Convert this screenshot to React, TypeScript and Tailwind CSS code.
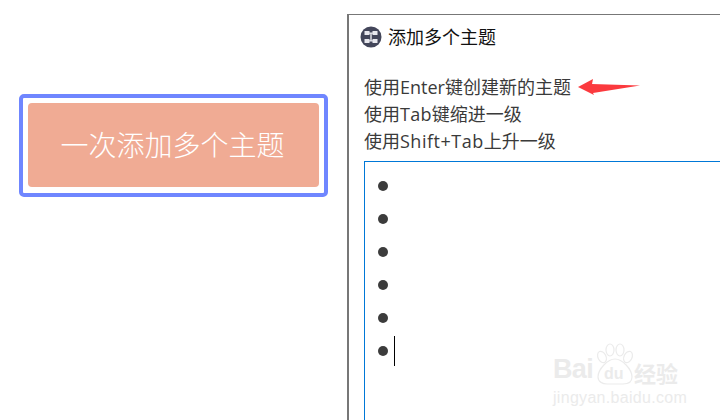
const fontStack = '"Open Sans", "Noto Sans CJK SC", sans-serif';

const MapIcon = () => (
  <svg width="22" height="22" viewBox="0 0 22 22" className="shrink-0">
    <circle cx="11" cy="11" r="10.5" fill="#43465a" />
    <path d="M4.5 5h5v1.5h3V5h5v4h-5V7.8h-.8v6.4h.8V13h5v4h-5v-1.5h-3V17h-5v-4h5v1.2h.8V7.8h-.8V9h-5z" fill="#e8e8ee" />
  </svg>
);

const RedArrow = () => (
  <svg width="64" height="18" viewBox="0 0 64 18" className="absolute left-[577px] top-[78px]">
    <path d="M1 9 L16 1 L15 6 L63 7.5 L16 15 L17 17 Z" fill="#fb3a3e" />
  </svg>
);

const Watermark = () => (
  <div className="absolute left-[553px] top-[343px] w-[130px] text-[#ebebeb]">
    <div className="flex h-[40px] items-end leading-none">
      <span className="text-[27px] font-bold tracking-tight" style={{ fontFamily: '"Liberation Sans", sans-serif' }}>
        Bai
      </span>
      <div className="relative -mb-[2px] ml-[3px] h-[42px] w-[38px] shrink-0">
        <svg width="38" height="42" viewBox="0 0 38 42" fill="none" stroke="#ebebeb" strokeWidth="1.2">
          <ellipse cx="6" cy="14" rx="4" ry="6" transform="rotate(-25 6 14)" />
          <ellipse cx="14" cy="7" rx="4" ry="6" />
          <ellipse cx="24" cy="7" rx="4" ry="6" />
          <ellipse cx="32" cy="14" rx="4" ry="6" transform="rotate(25 32 14)" />
          <path d="M19 16c-7 0-17 10-17 18 0 5 5 7 9 7h16c5 0 9-2 9-7 0-8-10-18-17-18z" />
        </svg>
        <span className="absolute bottom-[3px] left-[8px] text-[16px] font-bold leading-none" style={{ fontFamily: '"Liberation Sans", sans-serif' }}>
          du
        </span>
      </div>
      <span className="text-[22px] font-bold" style={{ fontFamily: '"Noto Sans CJK SC", sans-serif' }}>
        经验
      </span>
    </div>
    <div className="mt-[7px] text-[16px] leading-none tracking-[0.3px]" style={{ fontFamily: '"Liberation Sans", sans-serif' }}>
      jingyan.baidu.com
    </div>
  </div>
);

export default function App() {
  return (
    <div className="relative flex h-[420px] w-[720px] overflow-hidden bg-white" style={{ fontFamily: fontStack }}>
      {/* Left: button */}
      <div className="w-[347px] shrink-0 pl-[19px] pt-[94px]">
        <div className="h-[103px] w-[309px] rounded-[5px] border-[4px] border-[#6f86ff] p-[5px]">
          <div className="flex h-[84px] items-center justify-center rounded-[4px] bg-[#f0ab94] pr-[2px] text-[28px] font-light text-white">
            一次添加多个主题
          </div>
        </div>
      </div>

      {/* Right: dialog */}
      <div className="mt-[14px] flex-1 border-l-2 border-t border-[#777777] pl-[15px]">
        <div className="-ml-[4px] flex h-[44px] items-center gap-[6px] text-[18px] text-[#111111]">
          <MapIcon />
          <span>添加多个主题</span>
        </div>
        <div className="mt-[15px] text-[18px] leading-[27px] text-[#3a3a3a]">
          <div>使用Enter键创建新的主题</div>
          <div>
            使用<span className="tracking-[0.3px]">Tab</span>键缩进一级
          </div>
          <div>
            使用<span className="tracking-[0.5px]">Shift+Tab</span>上升一级
          </div>
        </div>
        <div className="mt-[6px] h-[300px] border-l border-t border-[#0078d7] pl-[13px] pt-[7px]">
          {[0, 1, 2, 3, 4, 5].map((i) => (
            <div key={i} className="flex h-[33px] items-center">
              <span className="h-[10px] w-[10px] rounded-full bg-[#3c3c3c]" />
              {i === 5 && <span className="ml-[6px] h-[30px] w-px bg-black" />}
            </div>
          ))}
        </div>
      </div>

      <RedArrow />
      <Watermark />
    </div>
  );
}
